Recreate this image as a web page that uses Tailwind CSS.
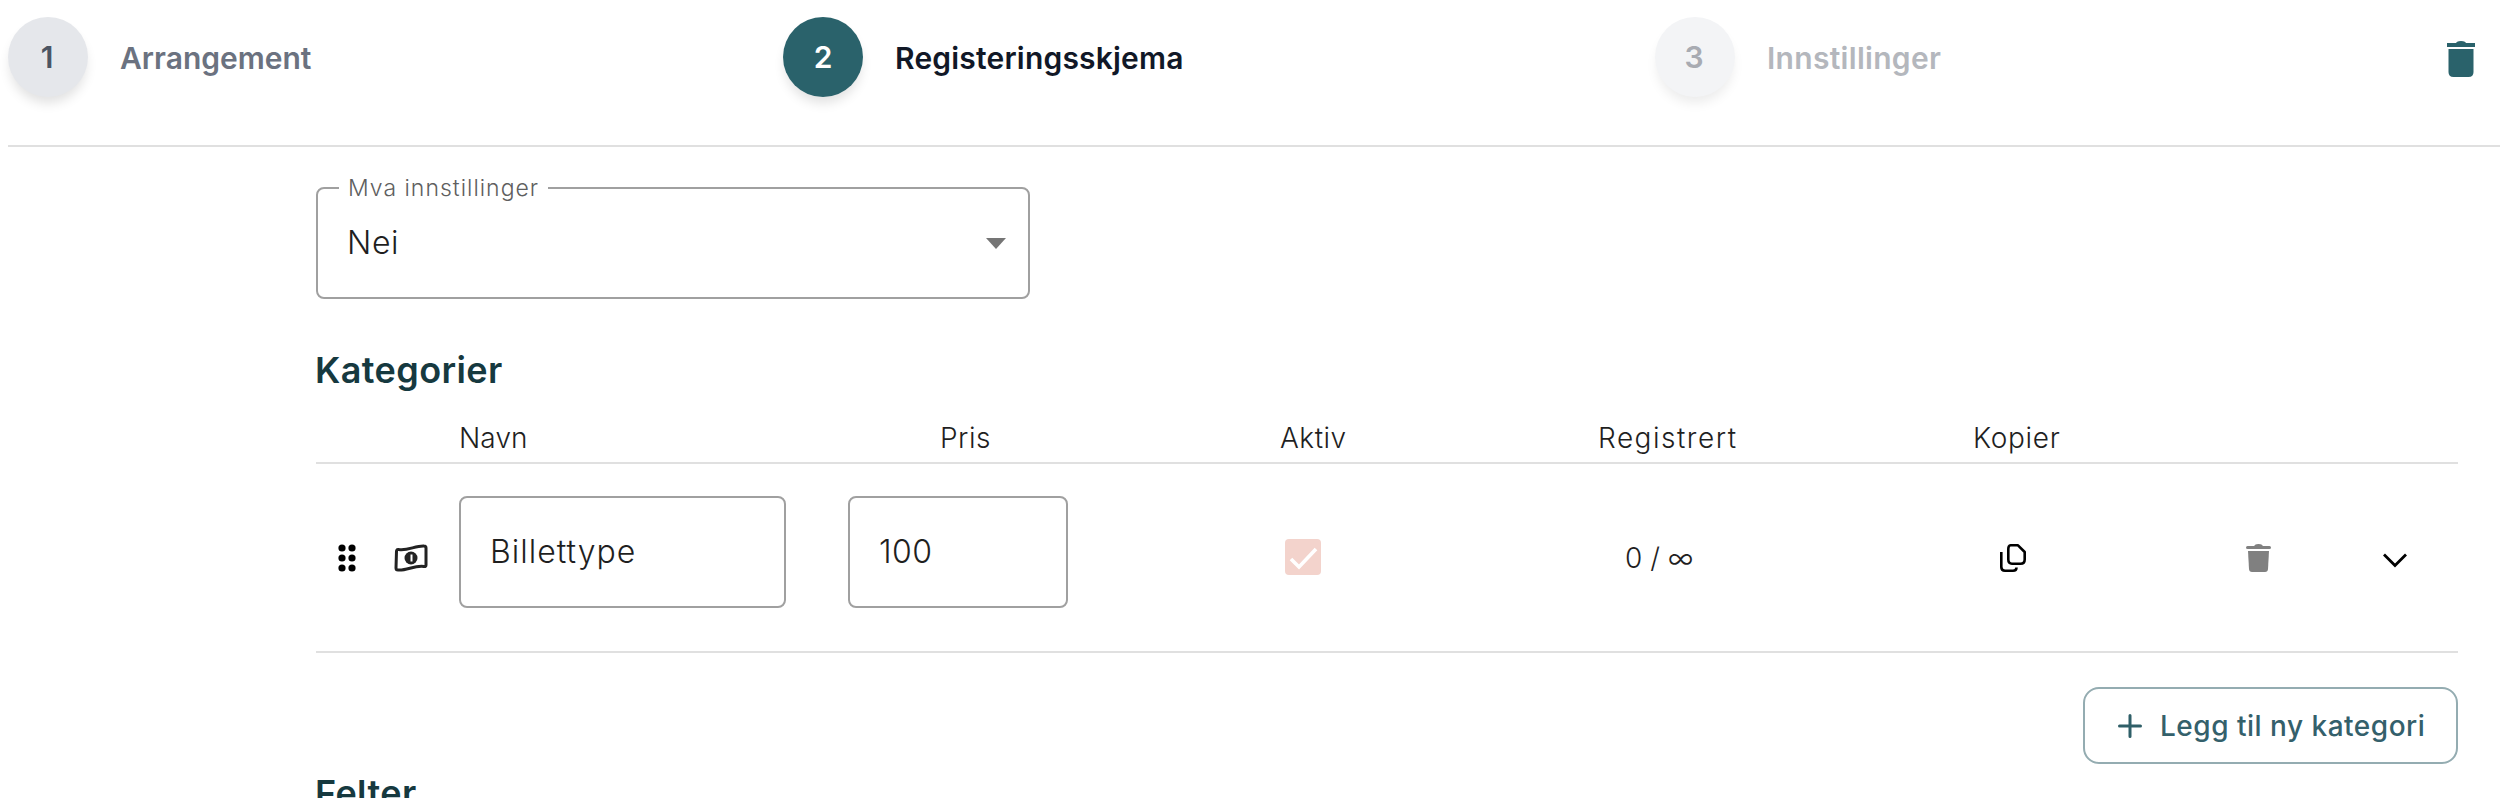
<!doctype html>
<html lang="no">
<head>
<meta charset="utf-8">
<title>Registreringsskjema</title>
<script src="https://cdn.jsdelivr.net/npm/@tailwindcss/browser@4"></script>
</head>
<body class="bg-white overflow-hidden font-['Inter',sans-serif]">
<div class="h-[798px] w-[2500px] overflow-hidden">
  <header class="ml-2 flex h-[147px] items-start border-b-2 border-[#e0e0e0] pt-[17px]">
    <div class="flex w-[775px] items-center">
      <div class="flex size-20 items-center justify-center rounded-full bg-[#e5e7eb] pr-[2px] text-[30px] font-semibold text-[#4b5563] shadow-[0_8px_12px_-2px_rgba(0,0,0,0.12)]">1</div>
      <span class="ml-[32px] pt-[2px] text-[30px] font-semibold text-[#6b7280]">Arrangement</span>
    </div>
    <div class="flex w-[872px] items-center">
      <div class="flex size-20 items-center justify-center rounded-full bg-[#2a626b] text-[30px] font-semibold text-white shadow-[0_8px_12px_-2px_rgba(0,0,0,0.12)]">2</div>
      <span class="ml-8 pt-[2px] text-[30px] tracking-[0.2px] font-semibold text-[#111827]">Registeringsskjema</span>
    </div>
    <div class="flex flex-1 items-center">
      <div class="flex size-20 items-center justify-center rounded-full bg-[#f3f4f6] pr-[2px] text-[30px] font-semibold text-[#a8abb2] shadow-[0_8px_12px_-2px_rgba(0,0,0,0.08)]">3</div>
      <span class="ml-8 pt-[2px] text-[30px] tracking-[0.3px] font-semibold text-[#b4b7bd]">Innstillinger</span>
      <svg class="ml-auto mr-[25px] mt-[4px] h-[36px] w-[28px]" viewBox="0 0 28 36" fill="#2a626b"><rect x="0" y="2" width="28" height="4"/><path d="M9 2.5Q9 0 14 0T19 2.5z"/><path d="M1.5 8H26.5V31Q26.5 36 21.5 36H6.5Q1.5 36 1.5 31z"/></svg>
    </div>
  </header>

  <main class="ml-[316px] mr-[42px]">
    <div class="relative mt-[40px] flex h-[112px] w-[714px] items-center rounded-lg border-2 border-[#a0a0a0] px-[29px] text-[32px] font-light tracking-[0.6px] text-[#1f1f1f]">
      <span class="absolute left-[21px] top-[-13px] bg-white px-[9px] text-[23px] leading-[24px] font-light tracking-[1px] text-[#5f5f5f]">Mva innstillinger</span>
      Nei
      <span class="absolute right-[22px] top-[49px] size-0 border-x-[10px] border-t-[11px] border-x-transparent border-t-[#757575]"></span>
    </div>

    <h2 class="mt-[47px] -ml-[1px] text-[36px] leading-[48px] font-semibold tracking-[0.4px] text-[#16393f]">Kategorier</h2>

    <div class="flex h-[70px] items-start border-b-2 border-[#e0e0e0] pt-[27px] pl-[143px] text-[28px] leading-[34px] text-[#1f1f1f]">
      <span class="w-[481px] font-light tracking-[0.1px]">Navn</span>
      <span class="w-[340px] font-light tracking-[0.5px]">Pris</span>
      <span class="w-[318px] font-light tracking-[0.5px]">Aktiv</span>
      <span class="w-[375px] font-light tracking-[1.5px]">Registrert</span>
      <span class="font-light tracking-[0.7px]">Kopier</span>
    </div>

    <div class="flex h-[189px] items-center border-b-2 border-[#e0e0e0]">
      <svg class="ml-[22px] h-[28px] w-[18px]" viewBox="0 0 18 28" fill="#000"><circle cx="4" cy="4" r="3.6"/><circle cx="14" cy="4" r="3.6"/><circle cx="4" cy="14" r="3.6"/><circle cx="14" cy="14" r="3.6"/><circle cx="4" cy="24" r="3.6"/><circle cx="14" cy="24" r="3.6"/></svg>
      <svg class="ml-[38px] h-[28px] w-[34px]" viewBox="0 0 34 28" fill="none" stroke="#222" stroke-width="3"><path d="M2.5 7Q3 5 5 5.5C13 7 22 1.5 30 2Q32 2 32 4V21Q32 23 30 22.500C21 21 12 27 4 26Q2 26 2 24z" stroke-linejoin="round"/><circle cx="17" cy="14" r="6.500" fill="#222" stroke="none"/><path d="M17.500 10.500V17.500" stroke="#fff" stroke-width="2"/></svg>
      <div class="mb-[11px] ml-[31px] flex h-[112px] w-[327px] items-center rounded-lg border-2 border-[#a0a0a0] px-[29px] text-[32px] font-light tracking-[1px] text-[#1f1f1f]">Billettype</div>
      <div class="mb-[11px] ml-[62px] flex h-[112px] w-[220px] items-center rounded-lg border-2 border-[#a0a0a0] px-[29px] text-[32px] font-light tracking-[0.5px] text-[#1f1f1f]">100</div>
      <svg class="ml-[217px] -mt-[1px] size-[36px]" viewBox="0 0 36 36"><rect width="36" height="36" rx="4" fill="#f3d3cc"/><path d="M6 20l8 8L31 10" fill="none" stroke="#fff" stroke-width="3.600"/></svg>
      <span class="ml-[304px] w-[66px] text-[28px] font-light whitespace-nowrap text-[#1f1f1f]">0 / ∞</span>
      <svg class="ml-[309px] h-[28px] w-[26px]" viewBox="0 0 26 28" fill="none" stroke="#000" stroke-width="2.600"><path d="M10.500 1.300H18L24.700 8V15.500Q24.700 19.700 20.500 19.700H12Q8.300 19.700 8.300 15.500V5.300Q8.300 1.300 10.500 1.300z" stroke-linejoin="round"/><path d="M1.300 8V23Q1.300 26.700 5 26.700H13Q16.500 26.700 16.500 23.500"/></svg>
      <svg class="ml-[220px] h-[28px] w-[25px]" viewBox="0 0 25 28" fill="#808080"><rect x="0" y="2" width="25" height="3" rx="1.500"/><path d="M8 3Q8 0 12.500 0T17 3z"/><path d="M2 7H23L22 25Q21.800 28 19 28H6Q3.200 28 3 25z"/></svg>
      <svg class="ml-[111px] mt-[4px] h-[16px] w-[26px]" viewBox="0 0 26 16" fill="none" stroke="#000" stroke-width="2.800"><path d="M2 2.500l11 11 11-11"/></svg>
    </div>

    <div class="mt-[34px] flex justify-end">
      <button class="flex h-[77px] w-[375px] items-center justify-start gap-[18px] rounded-[16px] border-2 border-[#94acb1] pl-[33px] text-[28px] font-medium tracking-[0.5px] text-[#34606b]">
        <svg class="size-[24px]" viewBox="0 0 24 24" fill="none" stroke="#2f5f68" stroke-width="3" stroke-linecap="round"><path d="M12 1.500v21M1.500 12h21"/></svg>
        Legg til ny kategori
      </button>
    </div>

    <h2 class="mt-[5px] -ml-[1px] text-[36px] leading-[48px] font-semibold tracking-[0.4px] text-[#16393f]">Felter</h2>
  </main>
</div>
</body>
</html>
